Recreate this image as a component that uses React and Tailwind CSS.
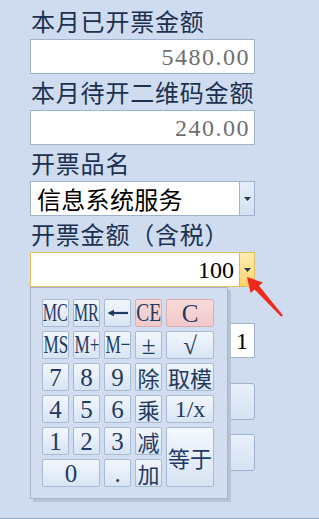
import React from 'react'

const cjk = "font-['Noto_Sans_CJK_SC',sans-serif]"
const serif = "font-['Liberation_Serif','Noto_Sans_CJK_SC',serif]"

const Label = ({ children }) => (
  <div className={`h-[36px] flex items-center pl-[1px] text-[24px] leading-none tracking-[0.8px] text-[#1c3150] ${cjk}`}>
    {children}
  </div>
)

const NumBox = ({ value }) => (
  <div className={`h-[35px] w-[225px] bg-white border border-[#9fb2cf] flex items-center justify-end pr-[4px] text-[24px] leading-none tracking-[1.5px] text-[#6f6f6f] ${serif}`}>
    {value}
  </div>
)

const Tri = () => (
  <svg width="7" height="4" viewBox="0 0 7 4"><path d="M0 0h7L3.5 4z" fill="#2c3a50" /></svg>
)

const Key = ({ children, red, className = '' }) => (
  <div
    className={`flex items-center justify-center rounded-[2px] border leading-none text-[#1f3a60] ${
      red
        ? 'border-[#dcaeb0] bg-linear-to-b from-[#f8dada] to-[#f1c9ca]'
        : 'border-[#a8bbd6] bg-linear-to-b from-[#f3f7fd] to-[#d8e4f3]'
    } ${className}`}
  >
    {children}
  </div>
)

// narrow letters, half-width like the original font
const Narrow = ({ children, scale = 'scale-x-[0.64]' }) => (
  <span className={`inline-block text-[26px] whitespace-nowrap ${scale} ${serif}`}>{children}</span>
)

const Digit = ({ children }) => (
  <span className={`text-[25px] ${serif}`}>{children}</span>
)

const Han = ({ children }) => (
  <span className={`text-[22px] whitespace-nowrap ${cjk}`}>{children}</span>
)

export default function App() {
  return (
    <div className="relative w-[319px] h-[519px] bg-[#cfdcef] border-b border-[#8ea6c7] overflow-hidden">
      <div className="pt-[3px] pl-[30px] flex flex-col">
        <Label>本月已开票金额</Label>
        <NumBox value="5480.00" />
        <Label>本月待开二维码金额</Label>
        <NumBox value="240.00" />
        <Label>开票品名</Label>
        <div className="h-[35px] w-[225px] bg-white border border-[#9fb2cf] flex">
          <div className={`flex-1 flex items-center pl-[6px] text-[24px] leading-none tracking-[0.3px] text-black ${cjk}`}>
            信息系统服务
          </div>
          <div className="w-[15px] border-l border-[#9fb2cf] bg-linear-to-b from-[#e6eefa] to-[#d4e1f2] flex items-center justify-center">
            <Tri />
          </div>
        </div>
        <Label>开票金额（含税）</Label>
        <div className="h-[35px] w-[225px] bg-white border border-[#e2c062] flex">
          <div className={`flex-1 flex items-center justify-end pr-[5px] text-[24px] leading-none text-black ${serif}`}>
            100
          </div>
          <div className="w-[15px] border-l border-[#e3b94c] bg-linear-to-b from-[#ffeeb0] to-[#fdd467] flex items-center justify-center">
            <Tri />
          </div>
        </div>

        {/* fields under the popup */}
        <div className="h-[36px]" />
        <div className="h-[35px] w-[225px] flex justify-end">
          <div className={`w-[120px] bg-white border border-[#9fb2cf] flex items-center justify-end pr-[6px] text-[24px] leading-none text-black ${serif}`}>
            1
          </div>
        </div>
        <div className="mt-[25px] h-[37px] w-[225px] rounded-[3px] border border-[#9fb2cf] bg-linear-to-b from-[#e8f0fb] to-[#d6e3f3]" />
        <div className="mt-[14px] h-[37px] w-[225px] rounded-[3px] border border-[#9fb2cf] bg-linear-to-b from-[#e8f0fb] to-[#d6e3f3]" />
      </div>

      {/* calculator popup */}
      <div className="absolute left-[30px] top-[287px] w-[198px] h-[212px] bg-[#d2deef] border border-[#a3b5cf] shadow-[3px_3px_0_#b7c3d3] pt-[11px] pl-[11px]">
        <div className="grid grid-cols-[27px_27px_27px_27px_48px] grid-rows-[repeat(6,28px)] gap-[4px]">
          <Key><Narrow scale="scale-x-[0.62]">MC</Narrow></Key>
          <Key><Narrow scale="scale-x-[0.62]">MR</Narrow></Key>
          <Key>
            <svg width="22" height="8" viewBox="0 0 22 8">
              <path d="M2 4h19" stroke="#1f3a60" strokeWidth="2.2" />
              <path d="M0.5 4L7 0.8v6.4z" fill="#1f3a60" />
            </svg>
          </Key>
          <Key red><Narrow scale="scale-x-[0.75]">CE</Narrow></Key>
          <Key red><span className={`text-[25px] ${serif}`}>C</span></Key>

          <Key><Narrow scale="scale-x-[0.66]">MS</Narrow></Key>
          <Key><Narrow scale="scale-x-[0.66]">M+</Narrow></Key>
          <Key><Narrow scale="scale-x-[0.66]">M−</Narrow></Key>
          <Key><Digit>±</Digit></Key>
          <Key><Digit>√</Digit></Key>

          <Key><Digit>7</Digit></Key>
          <Key><Digit>8</Digit></Key>
          <Key><Digit>9</Digit></Key>
          <Key><Han>除</Han></Key>
          <Key><Han>取模</Han></Key>

          <Key><Digit>4</Digit></Key>
          <Key><Digit>5</Digit></Key>
          <Key><Digit>6</Digit></Key>
          <Key><Han>乘</Han></Key>
          <Key><span className={`text-[24px] ${serif}`}>1/x</span></Key>

          <Key><Digit>1</Digit></Key>
          <Key><Digit>2</Digit></Key>
          <Key><Digit>3</Digit></Key>
          <Key><Han>减</Han></Key>
          <Key className="row-span-2"><Han>等于</Han></Key>

          <Key className="col-span-2"><Digit>0</Digit></Key>
          <Key><Digit>.</Digit></Key>
          <Key><Han>加</Han></Key>
        </div>
      </div>

      {/* red pointer */}
      <svg className="absolute left-0 top-0 pointer-events-none" width="319" height="519" viewBox="0 0 319 519">
        <path d="M247 277L263 282.5L259 285.8L283 315.4L281.2 316.8L254.6 289.4L250.6 293Z" fill="#ee2a1c" />
      </svg>
    </div>
  )
}
